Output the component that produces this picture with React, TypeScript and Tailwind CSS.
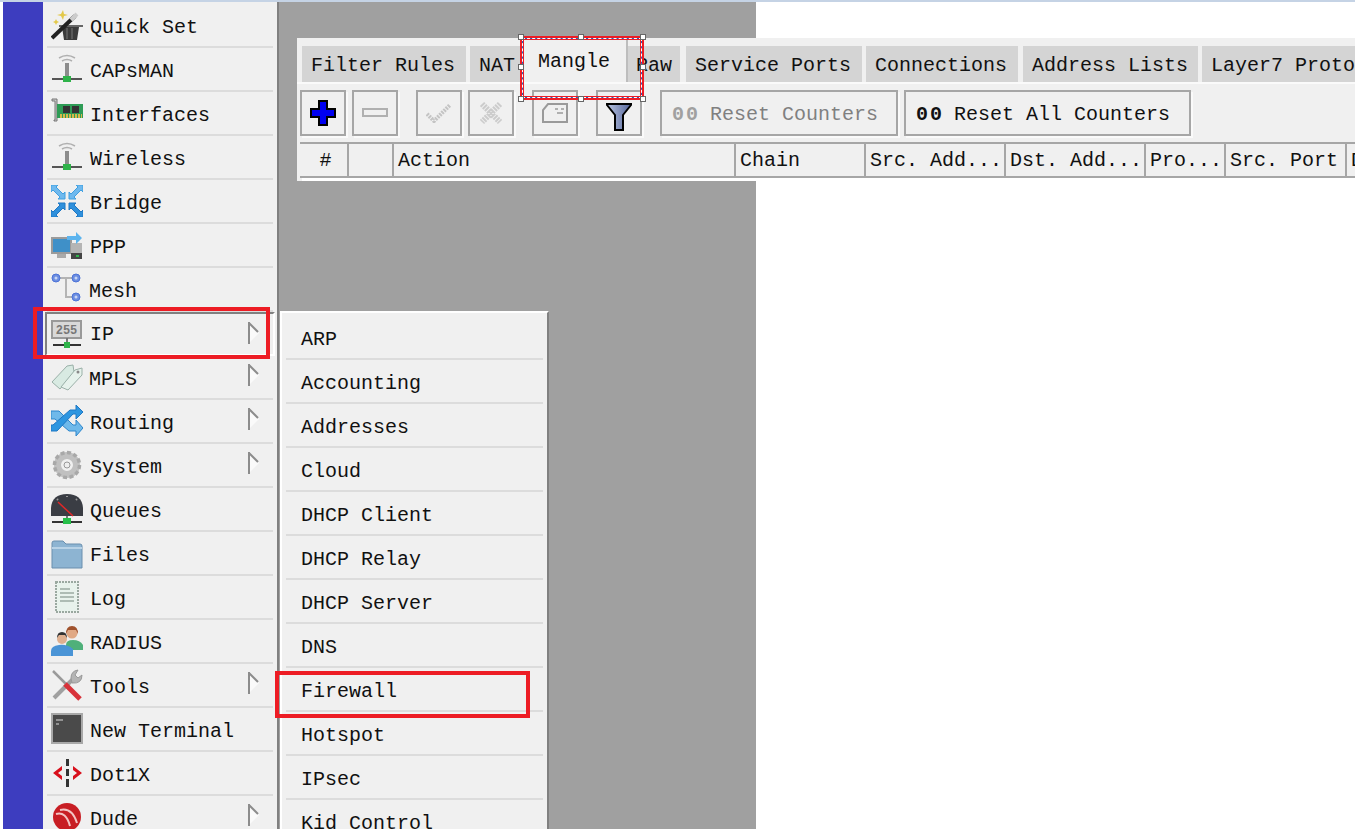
import React from "react";

const font = "font-['Liberation_Mono',monospace] text-[20px] leading-none text-[#111]";

const Antenna = () => (
  <svg viewBox="0 0 32 32" className="w-8 h-8">
    <path d="M8 5q8-5 16 0M11 8q5-3 10 0" fill="none" stroke="#b0b0b0" strokeWidth="1.5" />
    <rect x="14" y="10" width="4" height="14" fill="#8c8c8c" />
    <rect x="1" y="25" width="30" height="2" fill="#555" />
    <rect x="12" y="23" width="8" height="6" fill="#2fb34a" />
  </svg>
);

const QuickSet = () => (
  <svg viewBox="0 0 32 32" className="w-8 h-8">
    <path d="M10 5l2-4 1 4 4 1-4 1-1 4-2-4-4-1zM4 12l1-2 1 2 2 1-2 1-1 2-1-2-2-1z" fill="#e3c94a" />
    <path d="M8 16h24v2H8z" fill="#666" />
    <path d="M11 18h17l-2 13H13z" fill="#3a3a3a" />
    <path d="M16 19v11M21 19v11" stroke="#777" />
    <path d="M1 29L24 7" stroke="#222" strokeWidth="4" />
    <path d="M20 11L26 5" stroke="#ccc" strokeWidth="4" />
  </svg>
);

const Interfaces = () => (
  <svg viewBox="0 0 32 32" className="w-8 h-8">
    <path d="M1 2h5v22H3v-1h1V4H1z" fill="#c8c8c8" stroke="#777" />
    <rect x="6" y="7" width="26" height="14" fill="#2e9c56" />
    <rect x="12" y="9" width="7" height="7" fill="#333" />
    <rect x="21" y="9" width="7" height="7" fill="#333" />
    <path d="M9 19h22" stroke="#d9b84a" strokeWidth="4" strokeDasharray="2 1" />
  </svg>
);

// one double headed diagonal arrow, flipped for the four quadrants
const bridgeArrow = "M0 0h7L5 2l7 7 2-2v7H7l2-2-7-7-2 2z";

const Bridge = () => (
  <svg viewBox="0 0 32 32" className="w-8 h-8">
    <path d={bridgeArrow} fill="#6fb9ee" stroke="#3f9fe0" />
    <path d={bridgeArrow} fill="#6fb9ee" stroke="#3f9fe0" transform="translate(32 0) scale(-1 1)" />
    <path d={bridgeArrow} fill="#2f90dc" stroke="#1f78c4" transform="translate(0 32) scale(1 -1)" />
    <path d={bridgeArrow} fill="#2f90dc" stroke="#1f78c4" transform="translate(32 32) scale(-1 -1)" />
  </svg>
);

const Ppp = () => (
  <svg viewBox="0 0 32 32" className="w-8 h-8">
    <rect x="0" y="8" width="21" height="17" fill="#9b9b9b" />
    <rect x="2" y="10" width="17" height="13" fill="#3f90c8" />
    <path d="M6 25h9v4H6z" fill="#aaa" />
    <rect x="20" y="14" width="11" height="16" fill="#b5b5b5" />
    <rect x="20" y="24" width="11" height="6" fill="#444" />
    <rect x="25" y="26" width="3" height="2" fill="#2fb34a" />
    <path d="M16 7h9V3l6 6-6 6v-4h-9z" fill="#5cb4ee" />
  </svg>
);

const Mesh = () => (
  <svg viewBox="0 0 32 32" className="w-8 h-8">
    <path d="M9 5h12M15 5v19h6" fill="none" stroke="#b4b4b4" strokeWidth="2" />
    <g fill="#6c8ee0" stroke="#4c72d8">
      <circle cx="5" cy="5" r="4" />
      <circle cx="25" cy="5" r="4" />
      <circle cx="25" cy="24" r="4" />
    </g>
    <g fill="#c9d6f5">
      <circle cx="5" cy="5" r="1.5" />
      <circle cx="25" cy="5" r="1.5" />
      <circle cx="25" cy="24" r="1.5" />
    </g>
  </svg>
);

const Ip = () => (
  <svg viewBox="0 0 32 32" className="w-8 h-8">
    <rect x="1" y="3" width="29" height="17" fill="#d8d8d8" stroke="#999" strokeWidth="2" />
    <text x="15.5" y="16" textAnchor="middle" fontFamily="Liberation Mono" fontWeight="700" fontSize="12" fill="#777">255</text>
    <rect x="15" y="20" width="2" height="4" fill="#777" />
    <rect x="2" y="26" width="28" height="2" fill="#333" />
    <rect x="13" y="24" width="6" height="6" fill="#2fb34a" />
  </svg>
);

const Mpls = () => (
  <svg viewBox="0 0 32 32" className="w-8 h-8">
    <path d="M1 21L16 5l6-1 1 7-14 17z" fill="#d8eae2" stroke="#9ab0a8" />
    <path d="M10 26L24 9l7-2v7L17 29z" fill="#e6f2ec" stroke="#9ab0a8" />
    <circle cx="27" cy="11" r="1.5" fill="#888" />
  </svg>
);

const Routing = () => (
  <svg viewBox="0 0 32 32" className="w-8 h-8">
    <path d="M0 6h8l14 14h3v-5l7 8-7 8v-5h-7L4 14H0z" fill="#6fb9ea" stroke="#2d86cc" />
    <path d="M0 26h6L22 9h3v5l7-7-7-7v5h-6L2 20H0z" fill="#2d96e0" stroke="#1f78c4" />
  </svg>
);

const Gear = () => (
  <svg viewBox="0 0 32 32" className="w-8 h-8">
    <circle cx="16" cy="16" r="9.5" fill="none" stroke="#c0c0c0" strokeWidth="7" />
    <circle cx="16" cy="16" r="12.5" fill="none" stroke="#a8a8a8" strokeWidth="3.5" strokeDasharray="4 2.5" />
    <circle cx="16" cy="16" r="3" fill="#eee" stroke="#999" />
  </svg>
);

const Queues = () => (
  <svg viewBox="0 0 32 32" className="w-8 h-8">
    <path d="M0 23V15Q1 1 16 1t16 14v8z" fill="#3a3d44" />
    <path d="M7 9l15 14" stroke="#e02828" strokeWidth="1.5" />
    <path d="M6 6l1 1M16 3v1M26 6l-1 1" stroke="#999" strokeWidth="2" />
    <rect x="15" y="23" width="2" height="3" fill="#777" />
    <rect x="1" y="28" width="30" height="2" fill="#333" />
    <rect x="12" y="25" width="8" height="6" fill="#27c04a" />
  </svg>
);

const Files = () => (
  <svg viewBox="0 0 32 32" className="w-8 h-8">
    <path d="M1 31V6q0-2 2-2h9l3 3h14q2 0 2 2v22z" fill="#8db4d2" stroke="#6a8fae" />
    <path d="M1 11h30" stroke="#b8d2e6" strokeWidth="2" />
  </svg>
);

const Log = () => (
  <svg viewBox="0 0 32 32" className="w-8 h-8">
    <rect x="5" y="1" width="22" height="30" fill="#e8f2ec" stroke="#9aa8a0" strokeWidth="2" strokeDasharray="2 1" />
    <path d="M9 8h10M9 12h14M9 16h14M9 20h14" stroke="#aebcb4" strokeWidth="2" />
  </svg>
);

const Radius = () => (
  <svg viewBox="0 0 32 32" className="w-8 h-8">
    <path d="M15 20q0-5 7-5t10 5v5H15z" fill="#4fb07a" />
    <circle cx="21" cy="8" r="5.5" fill="#e0a884" />
    <path d="M15 9q0-8 6-8t6 8l-2-4h-8z" fill="#a0522d" />
    <path d="M0 31v-5q0-5 8-6t14 4v7z" fill="#4a94d6" />
    <circle cx="11" cy="14" r="5" fill="#dfb090" />
    <path d="M6 13q0-6 5-6t5 6l-2-3H8z" fill="#333" />
  </svg>
);

const Tools = () => (
  <svg viewBox="0 0 32 32" className="w-8 h-8">
    <path d="M2 2l14 14" stroke="#9a9a9a" strokeWidth="2.5" />
    <path d="M3 29L23 9" stroke="#a0a0a0" strokeWidth="4" />
    <path d="M14 15l15 15" stroke="#d8323a" strokeWidth="5" />
    <path d="M20 9q0-7 7-8l-3 5 3 3 4-3q0 9-10 8z" fill="#b4b4b4" stroke="#999" />
  </svg>
);

const Terminal = () => (
  <svg viewBox="0 0 32 32" className="w-8 h-8">
    <rect x="1" y="1" width="30" height="29" fill="#4a4a4a" stroke="#a8a8a8" strokeWidth="2" />
    <path d="M5 7h7M5 11h3" stroke="#aaa" strokeWidth="1.5" />
  </svg>
);

const Dot1x = () => (
  <svg viewBox="0 0 32 32" className="w-8 h-8">
    <path d="M15 2h3v7h-3zM15 12h3v7h-3zM15 22h3v8h-3z" fill="#333" />
    <path d="M2 16l9-7v4l-4 3 4 3v4zM31 16l-9-7v4l4 3-4 3v4z" fill="#d8101c" />
  </svg>
);

const Dude = () => (
  <svg viewBox="0 0 32 32" className="w-8 h-8">
    <circle cx="16" cy="16" r="14" fill="#c81e24" />
    <path d="M5 13q10-3 14 12M9 9q12-3 17 13" fill="none" stroke="#f3c4c4" strokeWidth="2" />
  </svg>
);

const items = [
  { label: "Quick Set", icon: <QuickSet /> },
  { label: "CAPsMAN", icon: <Antenna /> },
  { label: "Interfaces", icon: <Interfaces /> },
  { label: "Wireless", icon: <Antenna /> },
  { label: "Bridge", icon: <Bridge /> },
  { label: "PPP", icon: <Ppp /> },
  { label: "Mesh", icon: <Mesh />, nudge: true },
  { label: "IP", icon: <Ip />, arrow: true, active: true },
  { label: "MPLS", icon: <Mpls />, arrow: true, nudge: true },
  { label: "Routing", icon: <Routing />, arrow: true },
  { label: "System", icon: <Gear />, arrow: true },
  { label: "Queues", icon: <Queues /> },
  { label: "Files", icon: <Files /> },
  { label: "Log", icon: <Log /> },
  { label: "RADIUS", icon: <Radius /> },
  { label: "Tools", icon: <Tools />, arrow: true },
  { label: "New Terminal", icon: <Terminal /> },
  { label: "Dot1X", icon: <Dot1x /> },
  { label: "Dude", icon: <Dude />, arrow: true },
];

const subItems = [
  "ARP",
  "Accounting",
  "Addresses",
  "Cloud",
  "DHCP Client",
  "DHCP Relay",
  "DHCP Server",
  "DNS",
  "Firewall",
  "Hotspot",
  "IPsec",
  "Kid Control",
];

const tabs = [
  { label: "Filter Rules", cls: "w-[164px] pl-[9px] bg-[#d4d4d4] mr-[4px]" },
  { label: "NAT", cls: "w-[52px] pl-[9px] bg-[#d4d4d4]" },
  { label: "Mangle", cls: "w-[106px] pl-[16px] pb-[2px] bg-[#f0f0f0] border-r-2 border-[#bdbdbd] !h-[42px]" },
  { label: "Raw", cls: "w-[52px] pl-[8px] bg-[#d4d4d4] mr-[6px]" },
  { label: "Service Ports", cls: "w-[176px] pl-[9px] bg-[#d4d4d4] mr-[4px]" },
  { label: "Connections", cls: "w-[152px] pl-[9px] bg-[#d4d4d4] mr-[5px]" },
  { label: "Address Lists", cls: "w-[175px] pl-[9px] bg-[#d4d4d4] mr-[4px]" },
  { label: "Layer7 Protocols", cls: "w-[200px] pl-[9px] bg-[#d4d4d4]" },
];

const columns = [
  { label: "#", cls: "w-[49px] justify-center" },
  { label: "", cls: "w-[45px]" },
  { label: "Action", cls: "w-[342px]" },
  { label: "Chain", cls: "w-[130px]" },
  { label: "Src. Add...", cls: "w-[140px]" },
  { label: "Dst. Add...", cls: "w-[140px]" },
  { label: "Pro...", cls: "w-[80px]" },
  { label: "Src. Port", cls: "w-[121px]" },
  { label: "Dst. Port", cls: "w-[120px]" },
];

const handles = [
  "-left-[4px] -top-[4px]",
  "left-[56px] -top-[4px]",
  "-right-[4px] -top-[4px]",
  "-left-[4px] top-[26px]",
  "-right-[4px] top-[26px]",
  "-left-[4px] -bottom-[4px]",
  "left-[56px] -bottom-[4px]",
  "-right-[4px] -bottom-[4px]",
];

const Arrow = () => (
  <svg viewBox="0 0 12 22" className="absolute left-[201px] top-[8px] w-3 h-[22px]">
    <path d="M1 1l10 10L1 21z" fill="#fafafa" />
    <path d="M1 0v22M1 1l9 9" stroke="#8c8c8c" strokeWidth="2" fill="none" />
  </svg>
);

const ToolButton = ({ children, className = "" }: { children?: React.ReactNode; className?: string }) => (
  <div
    className={`h-[46px] w-[46px] flex items-center justify-center border-2 border-[#a6a6a6] bg-[#f0f0f0] shadow-[2px_2px_0_#fafafa] ${className}`}
  >
    {children}
  </div>
);

const Sidebar = () => (
  <div className="w-[236px] shrink-0 bg-[#f0f0f0] border-r-2 border-[#808080] pl-[4px] pr-[4px] pt-[2px]">
    {items.map((item) => (
      <div
        key={item.label}
        className={
          item.active
            ? "relative flex h-[44px] -mx-[2px] pl-[4px] items-center gap-[6px] border-2 border-t-[#808080] border-l-[#808080] border-r-white border-b-white"
            : "relative flex h-[44px] items-center gap-[6px] pl-[4px] border-b-2 border-[#dcdcdc]"
        }
      >
        {item.icon}
        <span
          className={`${font} ${item.nudge ? "ml-[0px]" : "ml-[1px]"} ${item.active ? "pt-[2px]" : "pt-[6px]"} whitespace-pre`}
        >
          {item.label}
        </span>
        {item.arrow && <Arrow />}
      </div>
    ))}
  </div>
);

const SubMenu = () => (
  <div className="absolute left-[1px] top-[309px] w-[269px] h-[520px] bg-[#f0f0f0] border-l-2 border-t-2 border-white border-r-2 border-r-[#808080] px-[4px] pt-[3px]">
    {subItems.map((label) => (
      <div key={label} className="flex h-[44px] items-center pl-[15px] border-b-2 border-[#dcdcdc]">
        <span className={`${font} pt-[6px] whitespace-pre`}>{label}</span>
      </div>
    ))}
  </div>
);

const FirewallWindow = () => (
  <div className="absolute left-[297px] top-[38px] w-[1058px] h-[143px] bg-[#f0f0f0] overflow-hidden">
    <div className="flex h-[44px] items-end pl-[5px] whitespace-pre">
      {tabs.map((tab) => (
        <div key={tab.label} className={`flex h-[36px] shrink-0 items-center overflow-hidden ${tab.cls}`}>
          <span className={`${font} pt-[4px]`}>{tab.label}</span>
        </div>
      ))}
    </div>
    <div className="h-[2px] bg-[#fafafa]" />
    <div className="flex h-[46px] mt-[6px] ml-[3px]">
      <ToolButton>
        <svg viewBox="0 0 26 26" className="w-[26px] h-[26px]">
          <path d="M9 1h8v8h8v8h-8v8H9v-8H1V9h8z" fill="#0000f0" stroke="#000" strokeWidth="2" />
        </svg>
      </ToolButton>
      <ToolButton className="ml-[6px]">
        <svg viewBox="0 0 26 10" className="w-[26px] h-[10px]">
          <rect x="1" y="1" width="24" height="7" fill="#f0f0f0" stroke="#b0b0b0" strokeWidth="2" />
        </svg>
      </ToolButton>
      <ToolButton className="ml-[18px]">
        <svg viewBox="0 0 26 20" className="w-[26px] h-[20px]">
          <path d="M1 11l7 7L24 2" fill="none" stroke="#c4c4c4" strokeWidth="4" strokeDasharray="2 1" />
        </svg>
      </ToolButton>
      <ToolButton className="ml-[6px]">
        <svg viewBox="0 0 24 24" className="w-[24px] h-[24px]">
          <path d="M3 3l18 18M21 3L3 21" stroke="#cccccc" strokeWidth="6" strokeDasharray="2 1" />
        </svg>
      </ToolButton>
      <ToolButton className="ml-[18px]">
        <svg viewBox="0 0 26 20" className="w-[26px] h-[20px]">
          <path d="M1 19V7l5-6h19v18z" fill="#f0f0f0" stroke="#9a9a9a" strokeWidth="2" />
          <path d="M13 6h3M19 6h3M15 10h6" stroke="#b0b0b0" strokeWidth="2" />
        </svg>
      </ToolButton>
      <ToolButton className="ml-[18px]">
        <svg viewBox="0 0 26 28" className="w-[26px] h-[28px] mt-[8px]">
          <defs>
            <linearGradient id="funnel" x1="0" x2="1" y1="0" y2="0">
              <stop offset="0" stopColor="#b8c4e0" />
              <stop offset="1" stopColor="#55659a" />
            </linearGradient>
          </defs>
          <path d="M1 1h24v1l-8 10v15H9V12L1 2z" fill="url(#funnel)" stroke="#000" strokeWidth="2" />
        </svg>
      </ToolButton>
      <ToolButton className="ml-[18px] !w-[238px] !justify-start pl-[10px] gap-[10px]">
        <span className={`${font} font-bold !text-[#a0a0a0] tracking-[2px] pt-[4px]`}>00</span>
        <span className={`${font} !text-[#808080] whitespace-pre pt-[4px]`}>Reset Counters</span>
      </ToolButton>
      <ToolButton className="ml-[6px] !w-[287px] !justify-start pl-[10px] gap-[10px]">
        <span className={`${font} font-bold tracking-[2px] pt-[4px]`}>00</span>
        <span className={`${font} whitespace-pre pt-[4px]`}>Reset All Counters</span>
      </ToolButton>
    </div>
    <div className="flex h-[36px] mt-[6px] ml-[3px] border-t-2 border-b-2 border-[#a6a6a6] whitespace-pre">
      {columns.map((col) => (
        <div key={col.label || "flag"} className={`flex shrink-0 items-center pl-[4px] border-r-2 border-[#a6a6a6] overflow-hidden ${col.cls}`}>
          <span className={`${font} pt-[2px]`}>{col.label}</span>
        </div>
      ))}
    </div>
    <div className="h-[3px] ml-[5px] bg-white" />
  </div>
);

export default function App() {
  return (
    <div className="relative h-[829px] w-[1355px] overflow-hidden bg-white">
      <div className="h-[2px] bg-[#c5d3e5]" />
      <div className="flex h-[827px]">
        <div className="w-[3px] shrink-0 bg-white" />
        <div className="w-[40px] shrink-0 bg-[#3d3dbf]" />
        <Sidebar />
        <div className="relative w-[477px] shrink-0 bg-[#a0a0a0]">
          <SubMenu />
        </div>
        <div className="flex-1 bg-white" />
      </div>
      <FirewallWindow />

      {/* annotations drawn on top of the capture */}
      <div className="absolute left-[33px] top-[307px] w-[237px] h-[52px] border-[4px] border-[#ed1c24]" />
      <div className="absolute left-[275px] top-[671px] w-[255px] h-[47px] border-[4px] border-[#ed1c24]" />
      <div className="absolute left-[520px] top-[36px] w-[124px] h-[64px] border-2 border-[#ed1c24]">
        <div className="absolute inset-0 border border-[#2b5fb8]" />
        <div className="absolute inset-0 border border-dashed border-white" />
        <div className="absolute inset-[1px] border border-[#ed1c24]" />
        {handles.map((pos) => (
          <div key={pos} className={`absolute w-[6px] h-[6px] bg-white border border-[#666] ${pos}`} />
        ))}
      </div>
    </div>
  );
}
